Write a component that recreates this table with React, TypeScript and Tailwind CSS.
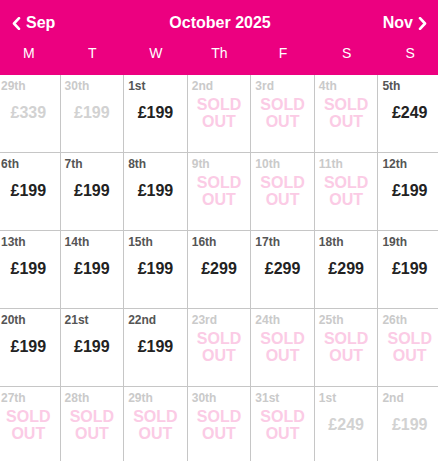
import React from "react";

type Cell = { d: string; kind: "out" | "in" | "sold"; p?: string };

const rows: Cell[][] = [
  [
    { d: "29th", kind: "out", p: "£339" },
    { d: "30th", kind: "out", p: "£199" },
    { d: "1st", kind: "in", p: "£199" },
    { d: "2nd", kind: "sold" },
    { d: "3rd", kind: "sold" },
    { d: "4th", kind: "sold" },
    { d: "5th", kind: "in", p: "£249" },
  ],
  [
    { d: "6th", kind: "in", p: "£199" },
    { d: "7th", kind: "in", p: "£199" },
    { d: "8th", kind: "in", p: "£199" },
    { d: "9th", kind: "sold" },
    { d: "10th", kind: "sold" },
    { d: "11th", kind: "sold" },
    { d: "12th", kind: "in", p: "£199" },
  ],
  [
    { d: "13th", kind: "in", p: "£199" },
    { d: "14th", kind: "in", p: "£199" },
    { d: "15th", kind: "in", p: "£199" },
    { d: "16th", kind: "in", p: "£299" },
    { d: "17th", kind: "in", p: "£299" },
    { d: "18th", kind: "in", p: "£299" },
    { d: "19th", kind: "in", p: "£199" },
  ],
  [
    { d: "20th", kind: "in", p: "£199" },
    { d: "21st", kind: "in", p: "£199" },
    { d: "22nd", kind: "in", p: "£199" },
    { d: "23rd", kind: "sold" },
    { d: "24th", kind: "sold" },
    { d: "25th", kind: "sold" },
    { d: "26th", kind: "sold" },
  ],
  [
    { d: "27th", kind: "sold" },
    { d: "28th", kind: "sold" },
    { d: "29th", kind: "sold" },
    { d: "30th", kind: "sold" },
    { d: "31st", kind: "sold" },
    { d: "1st", kind: "out", p: "£249" },
    { d: "2nd", kind: "out", p: "£199" },
  ],
];

const days = ["M", "T", "W", "Th", "F", "S", "S"];

function ChevronLeft() {
  return (
    <svg width="9" height="13" viewBox="0 0 9 13" fill="none">
      <polyline points="7,1.2 2,6.5 7,11.8" stroke="white" strokeWidth="2.6" strokeLinecap="round" strokeLinejoin="round" />
    </svg>
  );
}

function ChevronRight() {
  return (
    <svg width="9" height="13" viewBox="0 0 9 13" fill="none">
      <polyline points="2,1.2 7,6.5 2,11.8" stroke="white" strokeWidth="2.6" strokeLinecap="round" strokeLinejoin="round" />
    </svg>
  );
}

export default function App() {
  return (
    <div
      className="w-[438px] h-[461px] overflow-hidden bg-white"
      style={{ fontFamily: '"Liberation Sans", Arial, Helvetica, sans-serif' }}
    >
      <div className="bg-[#ec0080] text-white h-[75px]">
        <div className="h-[46px] flex items-center justify-between pl-[12px] pr-[11px]">
          <div className="flex items-center gap-[5px] text-[16px] font-bold">
            <ChevronLeft />
            <span>Sep</span>
          </div>
          <div className="text-[16px] font-bold pl-[2px]">October 2025</div>
          <div className="flex items-center gap-[5px] text-[16px] font-bold">
            <span>Nov</span>
            <ChevronRight />
          </div>
        </div>
        <div className="w-[445px] -ml-[3px] grid grid-cols-7 h-[15px] text-[14px] leading-[15px]">
          {days.map((d, i) => (
            <div key={i} className="text-center">
              {d}
            </div>
          ))}
        </div>
      </div>
      <div className="w-[445px] -ml-[3px] grid grid-cols-7">
        {rows.flat().map((c, i) => (
          <div key={i} className="h-[78px] border-r border-b border-[#c6c6c6] flex flex-col">
            <div
              className={`pt-[4px] pl-[4px] text-[12px] leading-[14px] font-bold ${
                c.kind === "in" ? "text-[#555555]" : "text-[#cacaca]"
              }`}
            >
              {c.d}
            </div>
            <div className="h-[40px] flex items-center justify-center">
              {c.kind === "sold" ? (
                <div className="text-center text-[16px] leading-[17px] font-bold text-[#fbcbe5]">
                  SOLD
                  <br />
                  OUT
                </div>
              ) : (
                <div
                  className={`text-[16px] font-bold ${
                    c.kind === "in" ? "text-[#222222]" : "text-[#d2d2d2]"
                  }`}
                >
                  {c.p}
                </div>
              )}
            </div>
          </div>
        ))}
      </div>
    </div>
  );
}
